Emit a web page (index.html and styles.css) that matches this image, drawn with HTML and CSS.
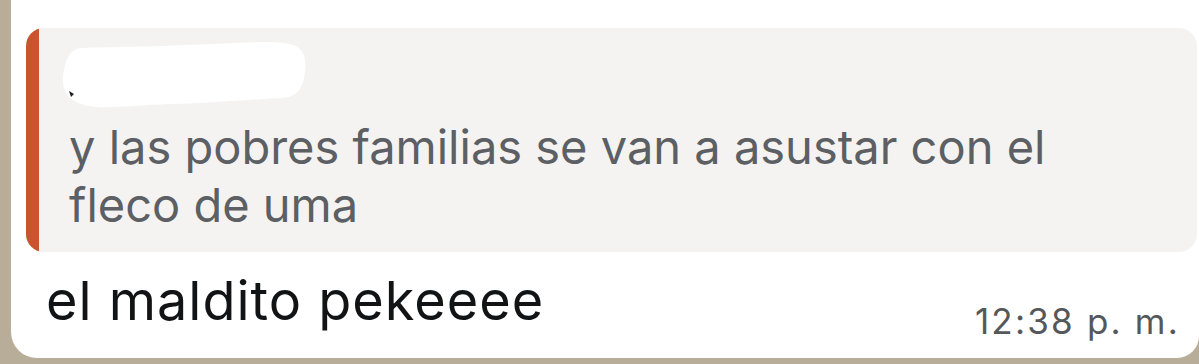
FILE: index.html
```html
<!DOCTYPE html>
<html lang="es">
<head>
<meta charset="utf-8">
<title>Mensaje</title>
<link rel="stylesheet" href="styles.css">
</head>
<body>
<div class="bubble">
  <div class="quote">
    <div class="quote-bar"></div>
    <div class="quote-body">
      <div class="quote-author">
        <svg class="redact" width="248" height="68" viewBox="0 0 248 68" aria-hidden="true">
          <path d="M20,6 C60,5 110,4 150,2 C190,0 215,-1 230,2 C243,5 247,15 245,30 C243,47 237,55 222,56 C180,58 150,61 110,62 C80,63 55,66 38,65 C15,64 2,54 3,36 C4,22 8,8 20,6 Z" fill="#ffffff"/>
          <polygon points="9,49 14,52 11,55" fill="#222"/>
        </svg>
      </div>
      <p class="quote-text">y las pobres familias se van a asustar con el fleco de uma</p>
    </div>
  </div>
  <div class="msg-row">
    <p class="msg-text">el maldito pekeeee</p>
    <span class="msg-time">12:38 p. m.</span>
  </div>
</div>
</body>
</html>
```

FILE: styles.css
```css
html, body {
  margin: 0;
  padding: 0;
}
body {
  background: #b8ad99;
  width: 1199px;
  height: 364px;
  overflow: hidden;
  font-family: "Inter", "Noto Sans", sans-serif;
}
.bubble {
  margin: -20px 0 0 11px;
  background: #ffffff;
  border-radius: 0 0 22px 26px;
  padding: 48px 2px 19px 15px;
}
.quote {
  display: flex;
  background: #f4f3f1;
  border-radius: 18px;
  overflow: hidden;
  height: 224px;
}
.quote-bar {
  width: 13px;
  flex: none;
  background: #c8552c;
}
.quote-body {
  flex: 1;
  padding-left: 30px;
}
.quote-author {
  height: 90px;
  padding-top: 14px;
  box-sizing: border-box;
}
.redact {
  display: block;
  margin-left: -9px;
}
.quote-text {
  margin: 0;
  width: 1000px;
  font-size: 47px;
  line-height: 58px;
  color: #5c5f63;
}
.msg-row {
  display: flex;
  justify-content: space-between;
  align-items: flex-start;
  margin-top: 21px;
}
.msg-text {
  margin: 0 0 0 20px;
  font-size: 54px;
  line-height: 56px;
  letter-spacing: 1px;
  color: #121314;
}
.msg-time {
  margin: 30px 17px 0 0;
  font-size: 35px;
  line-height: 36px;
  letter-spacing: 2.2px;
  color: #55585b;
}
```
